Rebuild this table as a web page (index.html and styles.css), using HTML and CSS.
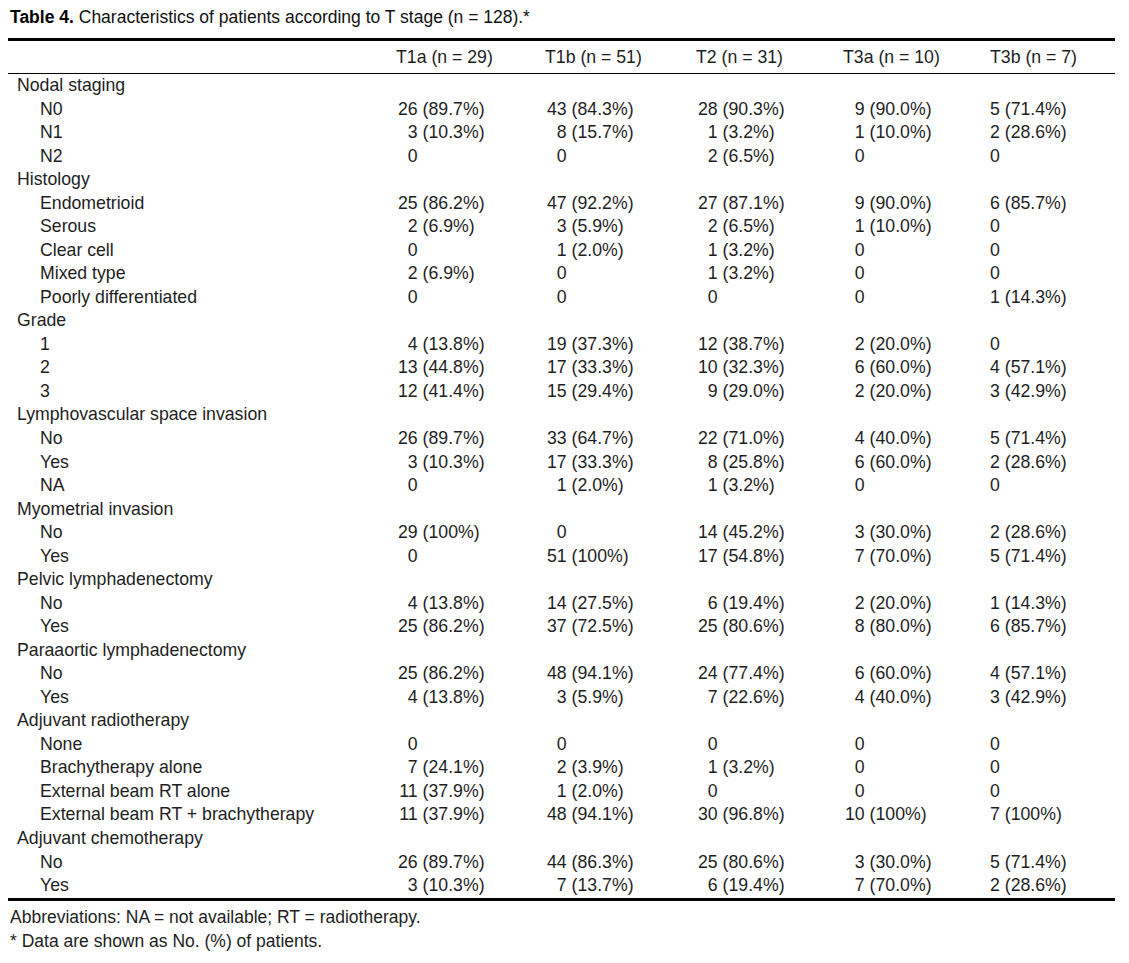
FILE: index.html
```html
<!DOCTYPE html>
<html lang="en">
<head>
<meta charset="utf-8">
<title>Table 4</title>
<link rel="stylesheet" href="styles.css">
</head>
<body>
<div class="page">
  <p class="caption"><b>Table 4.</b> Characteristics of patients according to T stage (n = 128).*</p>
  <table class="data">
    <colgroup>
      <col class="c-label"><col class="c1"><col class="c2"><col class="c3"><col class="c4"><col class="c5">
    </colgroup>
    <thead>
      <tr>
        <th></th>
        <th>T1a (n = 29)</th>
        <th>T1b (n = 51)</th>
        <th>T2 (n = 31)</th>
        <th>T3a (n = 10)</th>
        <th>T3b (n = 7)</th>
      </tr>
    </thead>
    <tbody>
      <tr class="group"><td>Nodal staging</td><td></td><td></td><td></td><td></td><td></td></tr>
      <tr><td class="sub">N0</td><td><span class="n">26</span> (89.7%)</td><td><span class="n">43</span> (84.3%)</td><td><span class="n">28</span> (90.3%)</td><td><span class="n">9</span> (90.0%)</td><td><span class="n">5</span> (71.4%)</td></tr>
      <tr><td class="sub">N1</td><td><span class="n">3</span> (10.3%)</td><td><span class="n">8</span> (15.7%)</td><td><span class="n">1</span> (3.2%)</td><td><span class="n">1</span> (10.0%)</td><td><span class="n">2</span> (28.6%)</td></tr>
      <tr><td class="sub">N2</td><td><span class="n">0</span></td><td><span class="n">0</span></td><td><span class="n">2</span> (6.5%)</td><td><span class="n">0</span></td><td><span class="n">0</span></td></tr>

      <tr class="group"><td>Histology</td><td></td><td></td><td></td><td></td><td></td></tr>
      <tr><td class="sub">Endometrioid</td><td><span class="n">25</span> (86.2%)</td><td><span class="n">47</span> (92.2%)</td><td><span class="n">27</span> (87.1%)</td><td><span class="n">9</span> (90.0%)</td><td><span class="n">6</span> (85.7%)</td></tr>
      <tr><td class="sub">Serous</td><td><span class="n">2</span> (6.9%)</td><td><span class="n">3</span> (5.9%)</td><td><span class="n">2</span> (6.5%)</td><td><span class="n">1</span> (10.0%)</td><td><span class="n">0</span></td></tr>
      <tr><td class="sub">Clear cell</td><td><span class="n">0</span></td><td><span class="n">1</span> (2.0%)</td><td><span class="n">1</span> (3.2%)</td><td><span class="n">0</span></td><td><span class="n">0</span></td></tr>
      <tr><td class="sub">Mixed type</td><td><span class="n">2</span> (6.9%)</td><td><span class="n">0</span></td><td><span class="n">1</span> (3.2%)</td><td><span class="n">0</span></td><td><span class="n">0</span></td></tr>
      <tr><td class="sub">Poorly differentiated</td><td><span class="n">0</span></td><td><span class="n">0</span></td><td><span class="n">0</span></td><td><span class="n">0</span></td><td><span class="n">1</span> (14.3%)</td></tr>

      <tr class="group"><td>Grade</td><td></td><td></td><td></td><td></td><td></td></tr>
      <tr><td class="sub">1</td><td><span class="n">4</span> (13.8%)</td><td><span class="n">19</span> (37.3%)</td><td><span class="n">12</span> (38.7%)</td><td><span class="n">2</span> (20.0%)</td><td><span class="n">0</span></td></tr>
      <tr><td class="sub">2</td><td><span class="n">13</span> (44.8%)</td><td><span class="n">17</span> (33.3%)</td><td><span class="n">10</span> (32.3%)</td><td><span class="n">6</span> (60.0%)</td><td><span class="n">4</span> (57.1%)</td></tr>
      <tr><td class="sub">3</td><td><span class="n">12</span> (41.4%)</td><td><span class="n">15</span> (29.4%)</td><td><span class="n">9</span> (29.0%)</td><td><span class="n">2</span> (20.0%)</td><td><span class="n">3</span> (42.9%)</td></tr>

      <tr class="group"><td>Lymphovascular space invasion</td><td></td><td></td><td></td><td></td><td></td></tr>
      <tr><td class="sub">No</td><td><span class="n">26</span> (89.7%)</td><td><span class="n">33</span> (64.7%)</td><td><span class="n">22</span> (71.0%)</td><td><span class="n">4</span> (40.0%)</td><td><span class="n">5</span> (71.4%)</td></tr>
      <tr><td class="sub">Yes</td><td><span class="n">3</span> (10.3%)</td><td><span class="n">17</span> (33.3%)</td><td><span class="n">8</span> (25.8%)</td><td><span class="n">6</span> (60.0%)</td><td><span class="n">2</span> (28.6%)</td></tr>
      <tr><td class="sub">NA</td><td><span class="n">0</span></td><td><span class="n">1</span> (2.0%)</td><td><span class="n">1</span> (3.2%)</td><td><span class="n">0</span></td><td><span class="n">0</span></td></tr>

      <tr class="group"><td>Myometrial invasion</td><td></td><td></td><td></td><td></td><td></td></tr>
      <tr><td class="sub">No</td><td><span class="n">29</span> (100%)</td><td><span class="n">0</span></td><td><span class="n">14</span> (45.2%)</td><td><span class="n">3</span> (30.0%)</td><td><span class="n">2</span> (28.6%)</td></tr>
      <tr><td class="sub">Yes</td><td><span class="n">0</span></td><td><span class="n">51</span> (100%)</td><td><span class="n">17</span> (54.8%)</td><td><span class="n">7</span> (70.0%)</td><td><span class="n">5</span> (71.4%)</td></tr>

      <tr class="group"><td>Pelvic lymphadenectomy</td><td></td><td></td><td></td><td></td><td></td></tr>
      <tr><td class="sub">No</td><td><span class="n">4</span> (13.8%)</td><td><span class="n">14</span> (27.5%)</td><td><span class="n">6</span> (19.4%)</td><td><span class="n">2</span> (20.0%)</td><td><span class="n">1</span> (14.3%)</td></tr>
      <tr><td class="sub">Yes</td><td><span class="n">25</span> (86.2%)</td><td><span class="n">37</span> (72.5%)</td><td><span class="n">25</span> (80.6%)</td><td><span class="n">8</span> (80.0%)</td><td><span class="n">6</span> (85.7%)</td></tr>

      <tr class="group"><td>Paraaortic lymphadenectomy</td><td></td><td></td><td></td><td></td><td></td></tr>
      <tr><td class="sub">No</td><td><span class="n">25</span> (86.2%)</td><td><span class="n">48</span> (94.1%)</td><td><span class="n">24</span> (77.4%)</td><td><span class="n">6</span> (60.0%)</td><td><span class="n">4</span> (57.1%)</td></tr>
      <tr><td class="sub">Yes</td><td><span class="n">4</span> (13.8%)</td><td><span class="n">3</span> (5.9%)</td><td><span class="n">7</span> (22.6%)</td><td><span class="n">4</span> (40.0%)</td><td><span class="n">3</span> (42.9%)</td></tr>

      <tr class="group"><td>Adjuvant radiotherapy</td><td></td><td></td><td></td><td></td><td></td></tr>
      <tr><td class="sub">None</td><td><span class="n">0</span></td><td><span class="n">0</span></td><td><span class="n">0</span></td><td><span class="n">0</span></td><td><span class="n">0</span></td></tr>
      <tr><td class="sub">Brachytherapy alone</td><td><span class="n">7</span> (24.1%)</td><td><span class="n">2</span> (3.9%)</td><td><span class="n">1</span> (3.2%)</td><td><span class="n">0</span></td><td><span class="n">0</span></td></tr>
      <tr><td class="sub">External beam RT alone</td><td><span class="n">11</span> (37.9%)</td><td><span class="n">1</span> (2.0%)</td><td><span class="n">0</span></td><td><span class="n">0</span></td><td><span class="n">0</span></td></tr>
      <tr><td class="sub">External beam RT + brachytherapy</td><td><span class="n">11</span> (37.9%)</td><td><span class="n">48</span> (94.1%)</td><td><span class="n">30</span> (96.8%)</td><td><span class="n">10</span> (100%)</td><td><span class="n">7</span> (100%)</td></tr>

      <tr class="group"><td>Adjuvant chemotherapy</td><td></td><td></td><td></td><td></td><td></td></tr>
      <tr><td class="sub">No</td><td><span class="n">26</span> (89.7%)</td><td><span class="n">44</span> (86.3%)</td><td><span class="n">25</span> (80.6%)</td><td><span class="n">3</span> (30.0%)</td><td><span class="n">5</span> (71.4%)</td></tr>
      <tr><td class="sub">Yes</td><td><span class="n">3</span> (10.3%)</td><td><span class="n">7</span> (13.7%)</td><td><span class="n">6</span> (19.4%)</td><td><span class="n">7</span> (70.0%)</td><td><span class="n">2</span> (28.6%)</td></tr>
    </tbody>
  </table>
  <div class="notes">
    <p>Abbreviations: NA = not available; RT = radiotherapy.</p>
    <p>* Data are shown as No. (%) of patients.</p>
  </div>
</div>
</body>
</html>
```

FILE: styles.css
```css
html, body {
  margin: 0;
  padding: 0;
  background: #ffffff;
}

body {
  font-family: "Liberation Sans", Arial, Helvetica, sans-serif;
  color: #1e1e1e;
  font-size: 17.7px;
}

.page {
  width: 1107px;
  padding: 0 14px 0 8px;
}

.caption {
  margin: 0;
  padding-left: 2px;
  height: 38px;
  line-height: 34px;
  font-size: 17.5px;
  color: #111;
}

.caption b {
  font-weight: bold;
  color: #000;
}

.data {
  width: 1107px;
  border-collapse: collapse;
  table-layout: fixed;
  border-top: 3px solid #000;
  border-bottom: 3px solid #000;
}

.c-label { width: 388px; }
.c1 { width: 149px; }
.c2 { width: 151px; }
.c3 { width: 147px; }
.c4 { width: 147px; }
.c5 { width: 125px; }

.data th {
  font-weight: normal;
  text-align: left;
  height: 32px;
  padding: 0;
  line-height: 32px;
  border-bottom: 1px solid #000;
  white-space: nowrap;
}

.data td {
  padding: 0 0 0 2px;
  height: 23.53px;
  line-height: 23.53px;
  white-space: nowrap;
  vertical-align: middle;
}

.data td:first-child {
  padding-left: 9px;
}

.data td.sub {
  padding-left: 32px;
}

.data td:last-child {
  padding-left: 0;
}

.n {
  display: inline-block;
  width: 19.7px;
  text-align: right;
}

.data td:last-child .n {
  width: auto;
}

.notes {
  padding: 4px 0 0 2px;
}

.notes p {
  margin: 0;
  line-height: 24px;
  font-size: 17.5px;
}
```
